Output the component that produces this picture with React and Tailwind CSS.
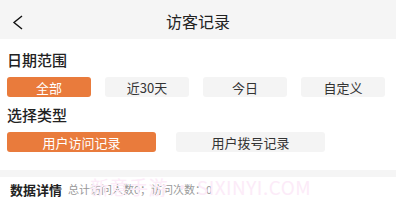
import React, { useState } from 'react';

const font = { fontFamily: '"Noto Sans CJK SC", "Noto Sans", sans-serif' };

export default function App() {
    const [range, setRange] = useState('all');
    const [type, setType] = useState('visit');

    const ranges = [
        { key: 'all', label: '全部' },
        { key: '30', label: '近30天' },
        { key: 'today', label: '今日' },
        { key: 'custom', label: '自定义' },
    ];
    const types = [
        { key: 'visit', label: '用户访问记录' },
        { key: 'call', label: '用户拨号记录' },
    ];

    return (
        <div className="relative w-[396px] h-[205px] bg-white overflow-hidden text-[#222]" style={font}>
            {/* header */}
            <div className="h-[39px] bg-[#f5f5f5] flex items-center relative">
                <svg className="absolute left-[12px] top-[15px]" width="12" height="15" viewBox="0 0 12 15" fill="none">
                    <path d="M10 1 L2 7.5 L10 14" stroke="#111" strokeWidth="1.4" />
                </svg>
                <h1 className="flex-1 text-center text-[16px] leading-none pt-[2px]">访客记录</h1>
            </div>

            <div className="pl-[7px] pt-[12px]">
                <p className="text-[15px] font-medium leading-[18px]">日期范围</p>
                <div className="flex gap-[14px] mt-[8px]">
                    {ranges.map(r => (
                        <button
                            key={r.key}
                            onClick={() => setRange(r.key)}
                            className={`w-[84px] h-[20px] rounded-[3px] text-[13px] leading-none ${range === r.key ? 'bg-[#e97b3c] text-white' : 'bg-[#f4f4f4] text-[#333]'}`}
                        >{r.label}</button>
                    ))}
                </div>

                <p className="text-[15px] font-medium leading-[18px] mt-[9px]">选择类型</p>
                <div className="flex gap-[20px] mt-[8px]">
                    {types.map(t => (
                        <button
                            key={t.key}
                            onClick={() => setType(t.key)}
                            className={`w-[149px] h-[20px] rounded-[3px] text-[13px] leading-none ${type === t.key ? 'bg-[#e97b3c] text-white' : 'bg-[#f4f4f4] text-[#333]'}`}
                        >{t.label}</button>
                    ))}
                </div>
            </div>

            <div className="h-[7px] bg-[#f5f5f5] mt-[18px]"></div>

            <div className="flex items-center h-[24px] pl-[10px] leading-none">
                <span className="text-[13px] font-bold">数据详情</span>
                <span className="text-[11px] text-[#999] ml-[6px]">总计访问人数0；访问次数：0</span>
            </div>

            <div className="absolute left-[90px] top-[177px] text-[19px] leading-none text-[#fcebf8] tracking-wide pointer-events-none">新意手游 • SIXINYI.COM</div>
        </div>
    );
}
